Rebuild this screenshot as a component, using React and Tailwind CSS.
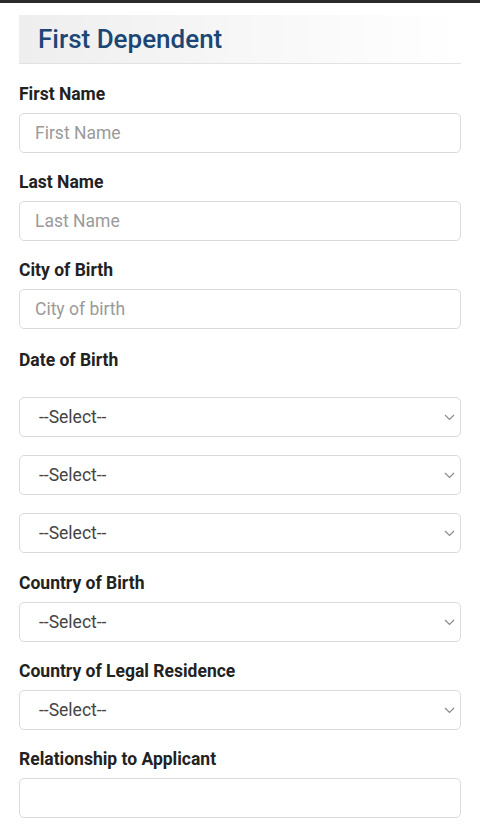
import React from "react";

const font = { fontFamily: "Roboto, 'Noto Sans', sans-serif" };

function Label({ children, className = "" }) {
  return (
    <div className={"h-[19px] leading-[19px] text-[17.5px] font-bold text-[#222222] " + className}>
      {children}
    </div>
  );
}

function TextInput({ placeholder }) {
  return (
    <input
      type="text"
      placeholder={placeholder}
      className="block h-[40px] w-full rounded-[5px] border border-[#dadada] bg-white px-[15px] text-[17.5px] text-[#333] placeholder:text-[#9a9a9a] outline-none"
      style={font}
    />
  );
}

function Select() {
  return (
    <div className="relative h-[40px] w-full rounded-[5px] border border-[#dadada] bg-white">
      <div className="flex h-full items-center pl-[19px] text-[17.5px] text-[#444444]">--Select--</div>
      <svg
        className="absolute right-[5px] top-[16px]"
        width="11"
        height="7"
        viewBox="0 0 11 7"
        fill="none"
      >
        <path d="M1 1l4.5 4.5L10 1" stroke="#8a8a8a" strokeWidth="1.2" />
      </svg>
    </div>
  );
}

export default function App() {
  return (
    <div className="min-h-[835px] w-[480px] bg-white" style={font}>
      <div className="h-[3px] bg-[#2b2b2b]" />
      <div className="px-[19px]">
        <div className="mt-[12px] flex h-[49px] items-center border-b border-[#e2e2e2] bg-gradient-to-r from-[#eeeeee] via-[#f7f7f7] to-white pl-[19px]">
          <h1 className="text-[26px] font-medium leading-none text-[#1b4675]">First Dependent</h1>
        </div>

        <div className="mt-[21px]">
          <Label>First Name</Label>
          <div className="mt-[9px]"><TextInput placeholder="First Name" /></div>
        </div>

        <div className="mt-[20px]">
          <Label>Last Name</Label>
          <div className="mt-[9px]"><TextInput placeholder="Last Name" /></div>
        </div>

        <div className="mt-[20px]">
          <Label>City of Birth</Label>
          <div className="mt-[9px]"><TextInput placeholder="City of birth" /></div>
        </div>

        <div className="mt-[22px]">
          <Label>Date of Birth</Label>
          <div className="mt-[27px] flex flex-col gap-[18px]">
            <Select />
            <Select />
            <Select />
          </div>
        </div>

        <div className="mt-[21px]">
          <Label>Country of Birth</Label>
          <div className="mt-[9px]"><Select /></div>
        </div>

        <div className="mt-[20px]">
          <Label>Country of Legal Residence</Label>
          <div className="mt-[9px]"><Select /></div>
        </div>

        <div className="mt-[20px]">
          <Label>Relationship to Applicant</Label>
          <div className="mt-[9px]"><TextInput placeholder="" /></div>
        </div>
      </div>
    </div>
  );
}
